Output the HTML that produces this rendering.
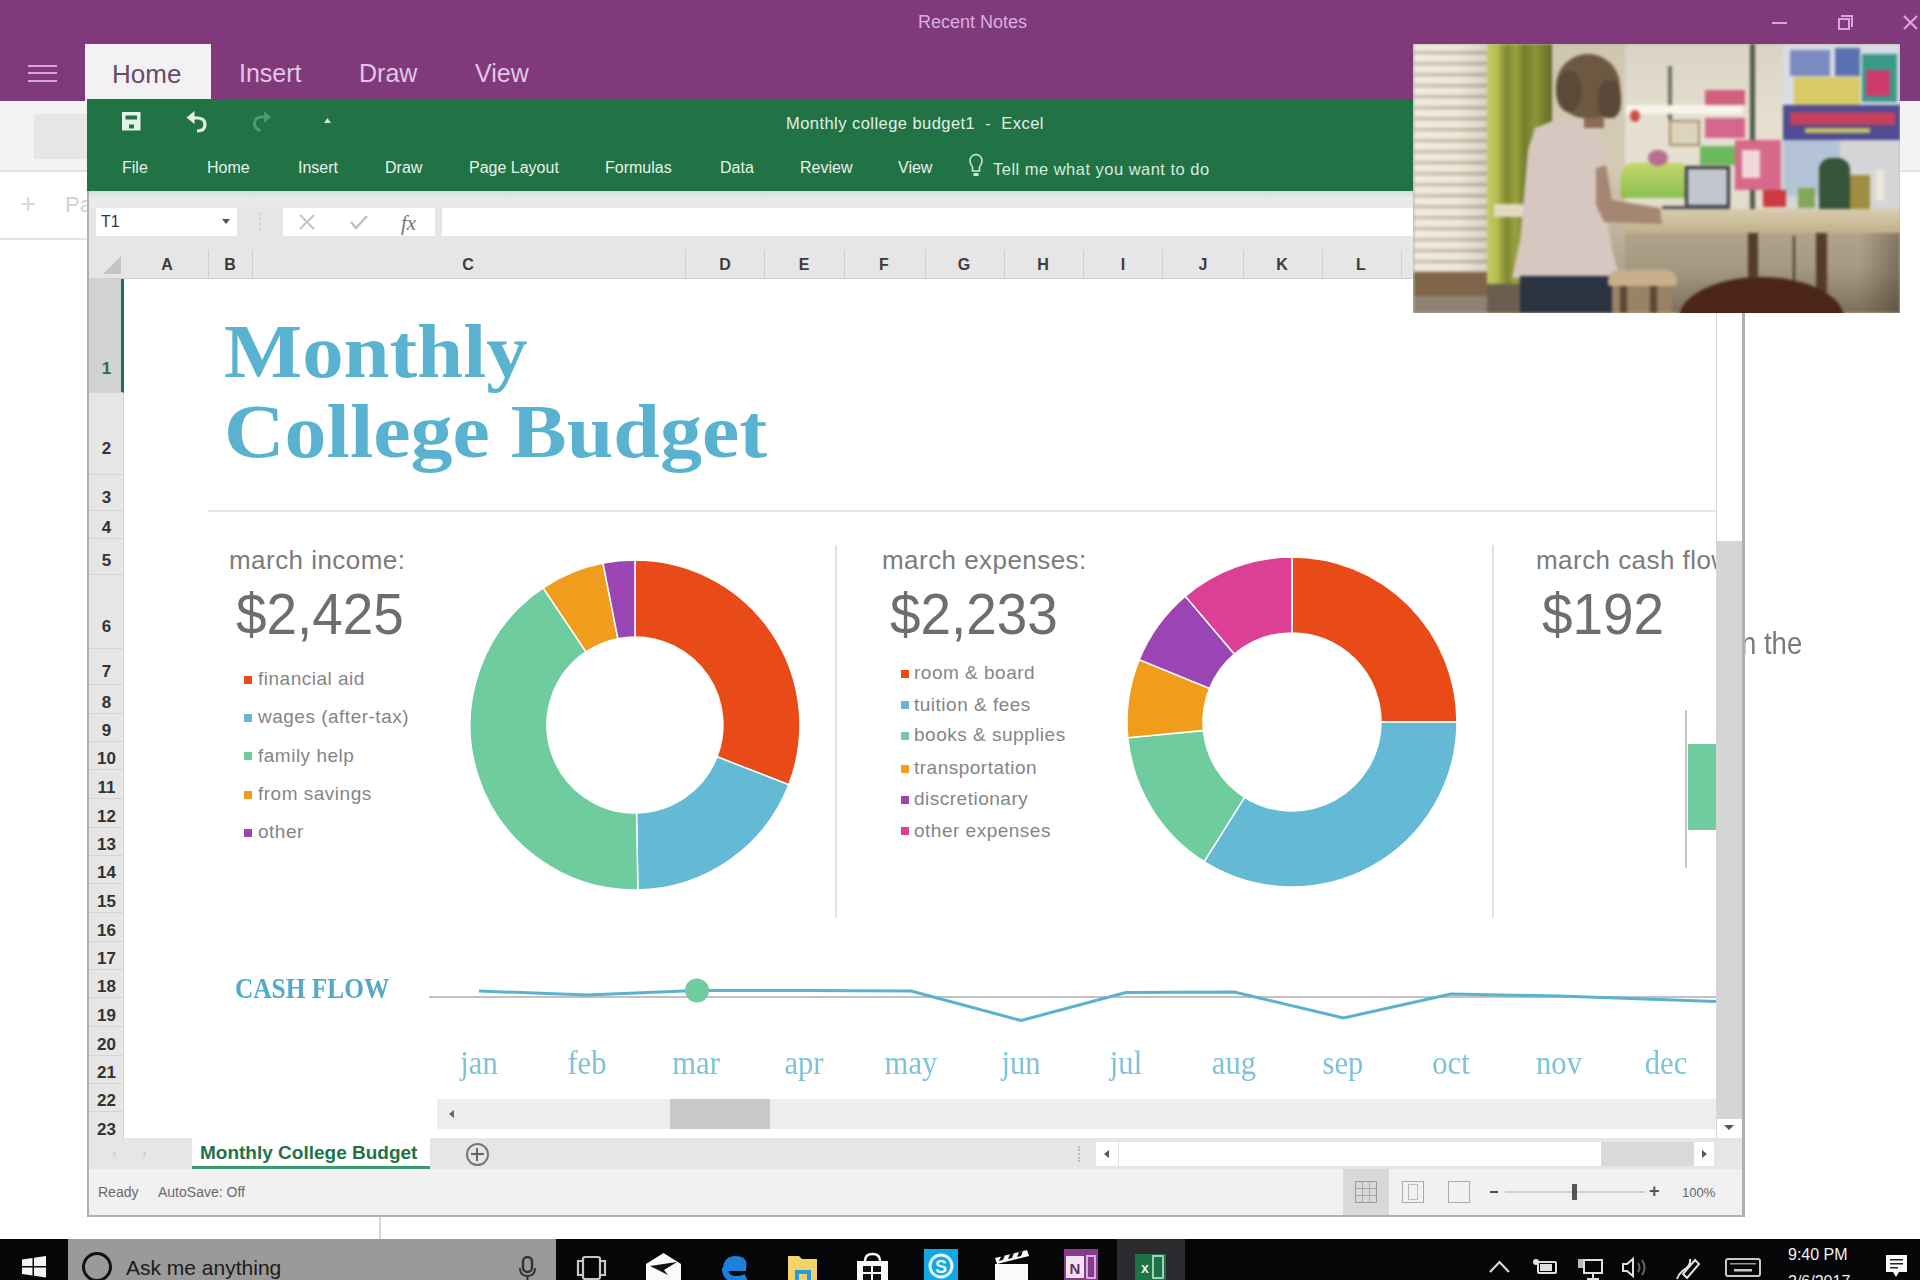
<!DOCTYPE html>
<html><head><meta charset="utf-8">
<style>
*{margin:0;padding:0;box-sizing:border-box}
html,body{width:1920px;height:1280px;overflow:hidden;background:#fff;font-family:"Liberation Sans",sans-serif}
.a{position:absolute}
.t{position:absolute;white-space:nowrap;line-height:1}
</style></head><body>
<!-- OneNote title/ribbon -->
<div class="a" style="left:0;top:0;width:1920px;height:101px;background:#80397b"></div>
<div class="a" style="left:28px;top:65px;width:29px;height:2px;background:#d9a6dc"></div>
<div class="a" style="left:28px;top:72px;width:29px;height:2px;background:#d9a6dc"></div>
<div class="a" style="left:28px;top:80px;width:29px;height:2px;background:#d9a6dc"></div>
<div class="a" style="left:85px;top:44px;width:126px;height:57px;background:#f2f2f2"></div>
<div class="t" style="left:112px;top:61px;font-size:26px;color:#684a6a">Home</div>
<div class="t" style="left:239px;top:61px;font-size:25px;color:#e2c6e4">Insert</div>
<div class="t" style="left:359px;top:61px;font-size:25px;color:#e2c6e4">Draw</div>
<div class="t" style="left:475px;top:61px;font-size:25px;color:#e2c6e4">View</div>
<div class="t" style="left:918px;top:13px;font-size:18px;color:#dcaee0">Recent Notes</div>
<!-- window controls -->
<div class="a" style="left:1772px;top:22px;width:15px;height:2px;background:#d9a6dc"></div>
<div class="a" style="left:1841px;top:15px;width:12px;height:12px;border-top:2px solid #d9a6dc;border-right:2px solid #d9a6dc"></div>
<div class="a" style="left:1838px;top:18px;width:12px;height:12px;border:2px solid #d9a6dc"></div>
<svg class="a" style="left:1900px;top:12px" width="20" height="20"><path d="M4 4 L17 17 M17 4 L4 17" stroke="#d9a6dc" stroke-width="2.2"/></svg>

<!-- OneNote page under -->
<div class="a" style="left:0;top:101px;width:1920px;height:69px;background:#f3f3f3"></div>
<div class="a" style="left:34px;top:114px;width:60px;height:45px;background:#e6e6e6"></div>
<div class="a" style="left:0;top:170px;width:1920px;height:2px;background:#e2e2e2"></div>
<div class="t" style="left:20px;top:190px;font-size:28px;color:#d8d8d8">+</div>
<div class="t" style="left:65px;top:194px;font-size:22px;color:#d2d2d2">Pa</div>
<div class="a" style="left:0;top:238px;width:100px;height:2px;background:#e4e4e4"></div>
<div class="t" style="left:1741px;top:627px;transform:scaleX(0.86);transform-origin:0 0;font-size:32px;color:#7a7a7a">n the</div>
<div class="a" style="left:379px;top:1216px;width:2px;height:24px;background:#d8d8d8"></div>

<!-- EXCEL WINDOW -->
<div id="xl" class="a" style="left:87px;top:99px;width:1658px;height:1118px;background:#fff;border-left:2px solid #a9b5b1;border-right:3px solid #a9b5b1;border-bottom:3px solid #a9b5b1">
</div>
<!-- ribbon -->
<div class="a" style="left:87px;top:99px;width:1658px;height:92px;background:#217346"></div>
<div class="t" style="left:786px;top:115px;letter-spacing:0.45px;font-size:16.5px;color:#e2f0e6">Monthly college budget1&nbsp; - &nbsp;Excel</div>
<div class="t" style="left:122px;top:160px;font-size:16px;color:#e6f2ea">File</div>
<div class="t" style="left:207px;top:160px;font-size:16px;color:#e6f2ea">Home</div>
<div class="t" style="left:298px;top:160px;font-size:16px;color:#e6f2ea">Insert</div>
<div class="t" style="left:385px;top:160px;font-size:16px;color:#e6f2ea">Draw</div>
<div class="t" style="left:469px;top:160px;font-size:16px;color:#e6f2ea">Page Layout</div>
<div class="t" style="left:605px;top:160px;font-size:16px;color:#e6f2ea">Formulas</div>
<div class="t" style="left:720px;top:160px;font-size:16px;color:#e6f2ea">Data</div>
<div class="t" style="left:800px;top:160px;font-size:16px;color:#e6f2ea">Review</div>
<div class="t" style="left:898px;top:160px;font-size:16px;color:#e6f2ea">View</div>
<div class="t" style="left:993px;top:161px;letter-spacing:0.48px;font-size:16.5px;color:#d6ecde">Tell me what you want to do</div>

<!-- formula bar -->
<div class="a" style="left:89px;top:191px;width:1653px;height:88px;background:#e6e6e6"></div>
<div class="a" style="left:89px;top:191px;width:1653px;height:17px;background:linear-gradient(180deg,#cfe0d6 0,#ebeaeb 40%,#eaeaea 100%)"></div>
<div class="a" style="left:96px;top:208px;width:141px;height:28px;background:#fff"></div>
<div class="t" style="left:101px;top:214px;font-size:16px;color:#333">T1</div>
<div class="a" style="left:283px;top:208px;width:152px;height:28px;background:#fff"></div>
<div class="a" style="left:442px;top:208px;width:1300px;height:28px;background:#fff"></div>

<!-- column headers -->
<div class="a" style="left:103px;top:256px;width:0;height:0;border-left:18px solid transparent;border-bottom:18px solid #c4c4c4"></div>
<div class="t" style="left:147px;top:257px;width:40px;text-align:center;font-size:16px;font-weight:bold;color:#3c3c3c">A</div>
<div class="t" style="left:210px;top:257px;width:40px;text-align:center;font-size:16px;font-weight:bold;color:#3c3c3c">B</div>
<div class="t" style="left:448px;top:257px;width:40px;text-align:center;font-size:16px;font-weight:bold;color:#3c3c3c">C</div>
<div class="t" style="left:705px;top:257px;width:40px;text-align:center;font-size:16px;font-weight:bold;color:#3c3c3c">D</div>
<div class="t" style="left:784px;top:257px;width:40px;text-align:center;font-size:16px;font-weight:bold;color:#3c3c3c">E</div>
<div class="t" style="left:864px;top:257px;width:40px;text-align:center;font-size:16px;font-weight:bold;color:#3c3c3c">F</div>
<div class="t" style="left:944px;top:257px;width:40px;text-align:center;font-size:16px;font-weight:bold;color:#3c3c3c">G</div>
<div class="t" style="left:1023px;top:257px;width:40px;text-align:center;font-size:16px;font-weight:bold;color:#3c3c3c">H</div>
<div class="t" style="left:1103px;top:257px;width:40px;text-align:center;font-size:16px;font-weight:bold;color:#3c3c3c">I</div>
<div class="t" style="left:1183px;top:257px;width:40px;text-align:center;font-size:16px;font-weight:bold;color:#3c3c3c">J</div>
<div class="t" style="left:1262px;top:257px;width:40px;text-align:center;font-size:16px;font-weight:bold;color:#3c3c3c">K</div>
<div class="t" style="left:1341px;top:257px;width:40px;text-align:center;font-size:16px;font-weight:bold;color:#3c3c3c">L</div>
<div class="a" style="left:208px;top:250px;width:1px;height:29px;background:#d0d0d0"></div>
<div class="a" style="left:252px;top:250px;width:1px;height:29px;background:#d0d0d0"></div>
<div class="a" style="left:685px;top:250px;width:1px;height:29px;background:#d0d0d0"></div>
<div class="a" style="left:764px;top:250px;width:1px;height:29px;background:#d0d0d0"></div>
<div class="a" style="left:844px;top:250px;width:1px;height:29px;background:#d0d0d0"></div>
<div class="a" style="left:925px;top:250px;width:1px;height:29px;background:#d0d0d0"></div>
<div class="a" style="left:1004px;top:250px;width:1px;height:29px;background:#d0d0d0"></div>
<div class="a" style="left:1083px;top:250px;width:1px;height:29px;background:#d0d0d0"></div>
<div class="a" style="left:1162px;top:250px;width:1px;height:29px;background:#d0d0d0"></div>
<div class="a" style="left:1243px;top:250px;width:1px;height:29px;background:#d0d0d0"></div>
<div class="a" style="left:1322px;top:250px;width:1px;height:29px;background:#d0d0d0"></div>
<div class="a" style="left:1401px;top:250px;width:1px;height:29px;background:#d0d0d0"></div>
<div class="a" style="left:89px;top:278px;width:1627px;height:1px;background:#cfcfcf"></div>
<!-- row headers -->
<div class="a" style="left:89px;top:279px;width:35px;height:860px;background:#e6e6e6;border-right:1px solid #d2d2d2"></div>
<div class="a" style="left:89px;top:279px;width:35px;height:114px;background:#d2d2d2;border-right:3px solid #217346"></div>
<div class="a" style="left:89px;top:392px;width:34px;height:1px;background:#d4d4d4"></div>
<div class="t" style="left:89px;top:360px;width:35px;text-align:center;font-size:17px;font-weight:bold;color:#217346">1</div>
<div class="a" style="left:89px;top:474px;width:34px;height:1px;background:#d4d4d4"></div>
<div class="t" style="left:89px;top:440px;width:35px;text-align:center;font-size:17px;font-weight:bold;color:#333">2</div>
<div class="a" style="left:89px;top:510px;width:34px;height:1px;background:#d4d4d4"></div>
<div class="t" style="left:89px;top:489px;width:35px;text-align:center;font-size:17px;font-weight:bold;color:#333">3</div>
<div class="a" style="left:89px;top:538px;width:34px;height:1px;background:#d4d4d4"></div>
<div class="t" style="left:89px;top:519px;width:35px;text-align:center;font-size:17px;font-weight:bold;color:#333">4</div>
<div class="a" style="left:89px;top:574px;width:34px;height:1px;background:#d4d4d4"></div>
<div class="t" style="left:89px;top:552px;width:35px;text-align:center;font-size:17px;font-weight:bold;color:#333">5</div>
<div class="a" style="left:89px;top:648px;width:34px;height:1px;background:#d4d4d4"></div>
<div class="t" style="left:89px;top:618px;width:35px;text-align:center;font-size:17px;font-weight:bold;color:#333">6</div>
<div class="a" style="left:89px;top:684px;width:34px;height:1px;background:#d4d4d4"></div>
<div class="t" style="left:89px;top:663px;width:35px;text-align:center;font-size:17px;font-weight:bold;color:#333">7</div>
<div class="a" style="left:89px;top:713px;width:34px;height:1px;background:#d4d4d4"></div>
<div class="t" style="left:89px;top:694px;width:35px;text-align:center;font-size:17px;font-weight:bold;color:#333">8</div>
<div class="a" style="left:89px;top:741px;width:34px;height:1px;background:#d4d4d4"></div>
<div class="t" style="left:89px;top:722px;width:35px;text-align:center;font-size:17px;font-weight:bold;color:#333">9</div>
<div class="a" style="left:89px;top:769px;width:34px;height:1px;background:#d4d4d4"></div>
<div class="t" style="left:89px;top:750px;width:35px;text-align:center;font-size:17px;font-weight:bold;color:#333">10</div>
<div class="a" style="left:89px;top:798px;width:34px;height:1px;background:#d4d4d4"></div>
<div class="t" style="left:89px;top:779px;width:35px;text-align:center;font-size:17px;font-weight:bold;color:#333">11</div>
<div class="a" style="left:89px;top:827px;width:34px;height:1px;background:#d4d4d4"></div>
<div class="t" style="left:89px;top:808px;width:35px;text-align:center;font-size:17px;font-weight:bold;color:#333">12</div>
<div class="a" style="left:89px;top:855px;width:34px;height:1px;background:#d4d4d4"></div>
<div class="t" style="left:89px;top:836px;width:35px;text-align:center;font-size:17px;font-weight:bold;color:#333">13</div>
<div class="a" style="left:89px;top:883px;width:34px;height:1px;background:#d4d4d4"></div>
<div class="t" style="left:89px;top:864px;width:35px;text-align:center;font-size:17px;font-weight:bold;color:#333">14</div>
<div class="a" style="left:89px;top:912px;width:34px;height:1px;background:#d4d4d4"></div>
<div class="t" style="left:89px;top:893px;width:35px;text-align:center;font-size:17px;font-weight:bold;color:#333">15</div>
<div class="a" style="left:89px;top:941px;width:34px;height:1px;background:#d4d4d4"></div>
<div class="t" style="left:89px;top:922px;width:35px;text-align:center;font-size:17px;font-weight:bold;color:#333">16</div>
<div class="a" style="left:89px;top:969px;width:34px;height:1px;background:#d4d4d4"></div>
<div class="t" style="left:89px;top:950px;width:35px;text-align:center;font-size:17px;font-weight:bold;color:#333">17</div>
<div class="a" style="left:89px;top:997px;width:34px;height:1px;background:#d4d4d4"></div>
<div class="t" style="left:89px;top:978px;width:35px;text-align:center;font-size:17px;font-weight:bold;color:#333">18</div>
<div class="a" style="left:89px;top:1026px;width:34px;height:1px;background:#d4d4d4"></div>
<div class="t" style="left:89px;top:1007px;width:35px;text-align:center;font-size:17px;font-weight:bold;color:#333">19</div>
<div class="a" style="left:89px;top:1055px;width:34px;height:1px;background:#d4d4d4"></div>
<div class="t" style="left:89px;top:1036px;width:35px;text-align:center;font-size:17px;font-weight:bold;color:#333">20</div>
<div class="a" style="left:89px;top:1083px;width:34px;height:1px;background:#d4d4d4"></div>
<div class="t" style="left:89px;top:1064px;width:35px;text-align:center;font-size:17px;font-weight:bold;color:#333">21</div>
<div class="a" style="left:89px;top:1111px;width:34px;height:1px;background:#d4d4d4"></div>
<div class="t" style="left:89px;top:1092px;width:35px;text-align:center;font-size:17px;font-weight:bold;color:#333">22</div>
<div class="a" style="left:89px;top:1140px;width:34px;height:1px;background:#d4d4d4"></div>
<div class="t" style="left:89px;top:1121px;width:35px;text-align:center;font-size:17px;font-weight:bold;color:#333">23</div>
<!-- SHEET -->
<div class="t" style="left:224px;top:313px;transform:scaleX(1.075);transform-origin:0 0;font-size:77px;font-weight:bold;font-family:'Liberation Serif',serif;color:#58b2d0">Monthly</div>
<div class="t" style="left:224px;top:393px;transform:scaleX(1.09);transform-origin:0 0;font-size:77px;font-weight:bold;font-family:'Liberation Serif',serif;color:#58b2d0">College Budget</div>
<div class="a" style="left:208px;top:510px;width:1508px;height:2px;background:#e6e6e6"></div>
<div class="a" style="left:835px;top:545px;width:2px;height:373px;background:#e2e2e2"></div>
<div class="a" style="left:1492px;top:545px;width:2px;height:373px;background:#e2e2e2"></div>
<div class="t" style="left:229px;top:547px;letter-spacing:0.45px;font-size:26px;color:#7b7b7b">march income:</div>
<div class="t" style="left:882px;top:547px;letter-spacing:0.45px;font-size:26px;color:#7b7b7b">march expenses:</div>
<div class="t" style="left:1536px;top:547px;letter-spacing:0.45px;font-size:26px;color:#7b7b7b">march cash flow</div>
<div class="t" style="left:236px;top:584.5px;transform:scaleX(0.946);transform-origin:0 0;font-size:58px;color:#6e6e6e">$2,425</div>
<div class="t" style="left:889.5px;top:584.5px;transform:scaleX(0.946);transform-origin:0 0;font-size:58px;color:#6e6e6e">$2,233</div>
<div class="t" style="left:1542px;top:584.5px;transform:scaleX(0.946);transform-origin:0 0;font-size:58px;color:#6e6e6e">$192</div>
<div class="a" style="left:244px;top:675.5px;width:8px;height:8px;background:#e94b18"></div>
<div class="t" style="left:258px;top:668.9px;letter-spacing:0.5px;font-size:19px;color:#858585">financial aid</div>
<div class="a" style="left:244px;top:713.8px;width:8px;height:8px;background:#64bad4"></div>
<div class="t" style="left:258px;top:707.2px;letter-spacing:0.5px;font-size:19px;color:#858585">wages (after-tax)</div>
<div class="a" style="left:244px;top:752.1px;width:8px;height:8px;background:#6fcc9e"></div>
<div class="t" style="left:258px;top:745.5px;letter-spacing:0.5px;font-size:19px;color:#858585">family help</div>
<div class="a" style="left:244px;top:790.5px;width:8px;height:8px;background:#f09c1c"></div>
<div class="t" style="left:258px;top:783.9px;letter-spacing:0.5px;font-size:19px;color:#858585">from savings</div>
<div class="a" style="left:244px;top:828.5px;width:8px;height:8px;background:#9b45b4"></div>
<div class="t" style="left:258px;top:821.9px;letter-spacing:0.5px;font-size:19px;color:#858585">other</div>
<div class="a" style="left:901px;top:670.0px;width:8px;height:8px;background:#e94b18"></div>
<div class="t" style="left:914px;top:663.4px;letter-spacing:0.5px;font-size:19px;color:#858585">room &amp; board</div>
<div class="a" style="left:901px;top:701.2px;width:8px;height:8px;background:#64bad4"></div>
<div class="t" style="left:914px;top:694.6px;letter-spacing:0.5px;font-size:19px;color:#858585">tuition &amp; fees</div>
<div class="a" style="left:901px;top:731.8px;width:8px;height:8px;background:#6fcc9e"></div>
<div class="t" style="left:914px;top:725.2px;letter-spacing:0.5px;font-size:19px;color:#858585">books &amp; supplies</div>
<div class="a" style="left:901px;top:764.9px;width:8px;height:8px;background:#f09c1c"></div>
<div class="t" style="left:914px;top:758.3px;letter-spacing:0.5px;font-size:19px;color:#858585">transportation</div>
<div class="a" style="left:901px;top:795.9px;width:8px;height:8px;background:#9b45b4"></div>
<div class="t" style="left:914px;top:789.3px;letter-spacing:0.5px;font-size:19px;color:#858585">discretionary</div>
<div class="a" style="left:901px;top:827.4px;width:8px;height:8px;background:#dd3e96"></div>
<div class="t" style="left:914px;top:820.8px;letter-spacing:0.5px;font-size:19px;color:#858585">other expenses</div>
<svg class="a" style="left:0;top:0" width="1920" height="1280" viewBox="0 0 1920 1280">
<path d="M635.0 560.0A165 165 0 0 1 788.8 784.7L717.0 756.8A88 88 0 0 0 635.0 637.0Z" fill="#e94b18" stroke="#fff" stroke-width="1.5"/>
<path d="M788.8 784.7A165 165 0 0 1 637.9 890.0L636.5 813.0A88 88 0 0 0 717.0 756.8Z" fill="#64bad4" stroke="#fff" stroke-width="1.5"/>
<path d="M637.9 890.0A165 165 0 0 1 543.2 587.9L586.0 651.9A88 88 0 0 0 636.5 813.0Z" fill="#6fcc9e" stroke="#fff" stroke-width="1.5"/>
<path d="M543.2 587.9A165 165 0 0 1 603.0 563.1L617.9 638.7A88 88 0 0 0 586.0 651.9Z" fill="#f09c1c" stroke="#fff" stroke-width="1.5"/>
<path d="M603.0 563.1A165 165 0 0 1 635.0 560.0L635.0 637.0A88 88 0 0 0 617.9 638.7Z" fill="#9b45b4" stroke="#fff" stroke-width="1.5"/>
<path d="M1292.0 557.0A165 165 0 0 1 1457.0 722.0L1381.0 722.0A89 89 0 0 0 1292.0 633.0Z" fill="#e94b18" stroke="#fff" stroke-width="1.5"/>
<path d="M1457.0 722.0A165 165 0 0 1 1204.1 861.6L1244.6 797.3A89 89 0 0 0 1381.0 722.0Z" fill="#64bad4" stroke="#fff" stroke-width="1.5"/>
<path d="M1204.1 861.6A165 165 0 0 1 1127.8 737.8L1203.4 730.5A89 89 0 0 0 1244.6 797.3Z" fill="#6fcc9e" stroke="#fff" stroke-width="1.5"/>
<path d="M1127.8 737.8A165 165 0 0 1 1139.2 659.7L1209.6 688.4A89 89 0 0 0 1203.4 730.5Z" fill="#f09c1c" stroke="#fff" stroke-width="1.5"/>
<path d="M1139.2 659.7A165 165 0 0 1 1185.3 596.2L1234.4 654.1A89 89 0 0 0 1209.6 688.4Z" fill="#9b45b4" stroke="#fff" stroke-width="1.5"/>
<path d="M1185.3 596.2A165 165 0 0 1 1292.0 557.0L1292.0 633.0A89 89 0 0 0 1234.4 654.1Z" fill="#dd3e96" stroke="#fff" stroke-width="1.5"/>
</svg>

<div class="a" style="left:1685px;top:710px;width:2px;height:158px;background:#c8c8c8"></div>
<div class="a" style="left:1688px;top:744px;width:28px;height:86px;background:#6fcc9e"></div>
<div class="t" style="left:235px;top:973px;transform:scaleX(0.845);transform-origin:0 0;font-size:30px;font-weight:bold;font-family:'Liberation Serif',serif;color:#55a9c8">CASH FLOW</div>
<svg class="a" style="left:0;top:0" width="1920" height="1280"><line x1="429" y1="997" x2="1716" y2="997" stroke="#c2c2c2" stroke-width="1.8"/><polyline fill="none" stroke="#5ab2cf" stroke-width="3" stroke-linejoin="round" points="479,991 587,995 696,990.5 804,990.5 911,991 1021,1020.5 1126,992.5 1234,992 1343.5,1018 1451,994 1559,996 1716,1001.5"/><circle cx="697" cy="990.5" r="12" fill="#6fcc9e"/></svg>
<div class="t" style="left:429px;top:1046.5px;width:100px;text-align:center;transform:scaleX(0.93);font-size:33px;font-family:'Liberation Serif',serif;color:#7ec3d8">jan</div>
<div class="t" style="left:537px;top:1046.5px;width:100px;text-align:center;transform:scaleX(0.93);font-size:33px;font-family:'Liberation Serif',serif;color:#7ec3d8">feb</div>
<div class="t" style="left:646px;top:1046.5px;width:100px;text-align:center;transform:scaleX(0.93);font-size:33px;font-family:'Liberation Serif',serif;color:#7ec3d8">mar</div>
<div class="t" style="left:754px;top:1046.5px;width:100px;text-align:center;transform:scaleX(0.93);font-size:33px;font-family:'Liberation Serif',serif;color:#7ec3d8">apr</div>
<div class="t" style="left:861px;top:1046.5px;width:100px;text-align:center;transform:scaleX(0.93);font-size:33px;font-family:'Liberation Serif',serif;color:#7ec3d8">may</div>
<div class="t" style="left:971px;top:1046.5px;width:100px;text-align:center;transform:scaleX(0.93);font-size:33px;font-family:'Liberation Serif',serif;color:#7ec3d8">jun</div>
<div class="t" style="left:1076px;top:1046.5px;width:100px;text-align:center;transform:scaleX(0.93);font-size:33px;font-family:'Liberation Serif',serif;color:#7ec3d8">jul</div>
<div class="t" style="left:1184px;top:1046.5px;width:100px;text-align:center;transform:scaleX(0.93);font-size:33px;font-family:'Liberation Serif',serif;color:#7ec3d8">aug</div>
<div class="t" style="left:1293px;top:1046.5px;width:100px;text-align:center;transform:scaleX(0.93);font-size:33px;font-family:'Liberation Serif',serif;color:#7ec3d8">sep</div>
<div class="t" style="left:1401px;top:1046.5px;width:100px;text-align:center;transform:scaleX(0.93);font-size:33px;font-family:'Liberation Serif',serif;color:#7ec3d8">oct</div>
<div class="t" style="left:1509px;top:1046.5px;width:100px;text-align:center;transform:scaleX(0.93);font-size:33px;font-family:'Liberation Serif',serif;color:#7ec3d8">nov</div>
<div class="t" style="left:1616px;top:1046.5px;width:100px;text-align:center;transform:scaleX(0.93);font-size:33px;font-family:'Liberation Serif',serif;color:#7ec3d8">dec</div>
<div class="a" style="left:437px;top:1099px;width:1279px;height:30px;background:#eeeeee"></div>
<div class="a" style="left:670px;top:1099px;width:100px;height:30px;background:#c9c9c9"></div>
<div class="a" style="left:449px;top:1110px;width:0;height:0;border-top:4px solid transparent;border-bottom:4px solid transparent;border-right:5px solid #666"></div>
<div class="a" style="left:1716px;top:279px;width:1px;height:860px;background:#d6d6d6"></div>
<div class="a" style="left:1717px;top:541px;width:25px;height:578px;background:#d5d5d5"></div>
<div class="a" style="left:1724px;top:1125px;width:0;height:0;border-left:5px solid transparent;border-right:5px solid transparent;border-top:5px solid #555"></div>
<div class="a" style="left:89px;top:1138px;width:1653px;height:31px;background:#e6e6e6"></div>
<div class="a" style="left:192px;top:1138px;width:238px;height:31px;background:#fff;border-bottom:3px solid #3c9a6c"></div>
<div class="t" style="left:200px;top:1143px;font-size:19px;font-weight:bold;color:#217346">Monthly College Budget</div>
<div class="t" style="left:112px;top:1146px;font-size:14px;color:#c4c4c4">&#x2039;</div>
<div class="t" style="left:142px;top:1146px;font-size:14px;color:#c4c4c4">&#x203A;</div>
<div class="a" style="left:466px;top:1143px;width:23px;height:23px;border:2px solid #777;border-radius:50%"></div>
<div class="a" style="left:471px;top:1153px;width:13px;height:2px;background:#666"></div>
<div class="a" style="left:476px;top:1148px;width:2px;height:13px;background:#666"></div>
<div class="a" style="left:1078px;top:1146px;width:2px;height:16px;border-left:2px dotted #bbb"></div>
<div class="a" style="left:1096px;top:1142px;width:505px;height:24px;background:#fff"></div>
<div class="a" style="left:1118px;top:1142px;width:1px;height:24px;background:#e6e6e6"></div>
<div class="a" style="left:1104px;top:1150px;width:0;height:0;border-top:4px solid transparent;border-bottom:4px solid transparent;border-right:5px solid #555"></div>
<div class="a" style="left:1601px;top:1142px;width:93px;height:24px;background:#d9d9d9"></div>
<div class="a" style="left:1694px;top:1142px;width:20px;height:24px;background:#fff"></div>
<div class="a" style="left:1702px;top:1150px;width:0;height:0;border-top:4px solid transparent;border-bottom:4px solid transparent;border-left:5px solid #555"></div>
<div class="a" style="left:89px;top:1169px;width:1653px;height:46px;background:#f1f1f1"></div>
<div class="t" style="left:98px;top:1185px;font-size:14px;color:#6a6a6a">Ready</div>
<div class="t" style="left:158px;top:1185px;font-size:14px;color:#6a6a6a">AutoSave: Off</div>
<div class="a" style="left:1343px;top:1169px;width:46px;height:46px;background:#d9d9d9"></div>
<div class="a" style="left:1355px;top:1181px;width:22px;height:22px;border:1px solid #999;background:repeating-linear-gradient(90deg,transparent 0 6px,#aaa 6px 7px),repeating-linear-gradient(0deg,transparent 0 6px,#aaa 6px 7px)"></div>
<div class="a" style="left:1402px;top:1181px;width:22px;height:22px;border:1px solid #aaa"></div>
<div class="a" style="left:1408px;top:1184px;width:10px;height:16px;border:1px solid #bbb"></div>
<div class="a" style="left:1448px;top:1181px;width:22px;height:22px;border:1px solid #aaa"></div>
<div class="a" style="left:1490px;top:1191px;width:8px;height:2px;background:#555"></div>
<div class="a" style="left:1505px;top:1191px;width:140px;height:2px;background:#cfcfcf"></div>
<div class="a" style="left:1572px;top:1184px;width:5px;height:16px;background:#555"></div>
<div class="t" style="left:1649px;top:1182px;font-size:18px;font-weight:bold;color:#555">+</div>
<div class="t" style="left:1682px;top:1186px;font-size:13px;color:#666">100%</div>
<!-- PHOTO -->
<div id="photo" class="a" style="left:1413px;top:44px;width:487px;height:269px;background:#bdb29a;overflow:hidden"><div class="a" style="left:0;top:0;width:487px;height:269px;filter:blur(1.4px)"><div class="a" style="left:0px;top:0px;width:487px;height:269px;background:#bdb29a;"></div>
<div class="a" style="left:1px;top:0px;width:74px;height:228px;background:repeating-linear-gradient(180deg,#efe8dc 0 6px,#ddd3c2 6px 8px,#b8ad9a 8px 10px,#e6ddcc 10px 11px);"></div>
<div class="a" style="left:1px;top:0px;width:74px;height:228px;background:linear-gradient(90deg,rgba(255,255,255,0.15),rgba(0,0,0,0) 60%,rgba(60,50,30,0.12));"></div>
<div class="a" style="left:1px;top:228px;width:76px;height:24px;background:#7f6448;"></div>
<div class="a" style="left:1px;top:252px;width:76px;height:17px;background:#8c8272;"></div>
<div class="a" style="left:74px;top:0px;width:65px;height:240px;background:linear-gradient(90deg,#c6cc64 0,#b2bb50 16%,#7e8732 30%,#9aa33e 44%,#737c2c 58%,#8d9636 74%,#626b28 100%);"></div>
<div class="a" style="left:74px;top:240px;width:65px;height:29px;background:#6a5e4e;"></div>
<div class="a" style="left:139px;top:0px;width:73px;height:269px;background:linear-gradient(180deg,#cfc6b0 0,#d4cbb4 45%,#bcb098 72%,#9a8e78 100%);"></div>
<div class="a" style="left:212px;top:0px;width:158px;height:165px;background:linear-gradient(180deg,#d9d3c4 0,#e6e0d2 50%,#e2dccb 100%);"></div>
<div class="a" style="left:255px;top:22px;width:4px;height:54px;background:#6a7460;"></div>
<div class="a" style="left:337px;top:0px;width:5px;height:165px;background:#4e5a48;"></div>
<div class="a" style="left:292px;top:46px;width:40px;height:15px;background:#d0607e;"></div>
<div class="a" style="left:292px;top:74px;width:40px;height:20px;background:#d4668a;"></div>
<div class="a" style="left:256px;top:76px;width:31px;height:26px;background:#ddd4bc;border:2px solid #a48e66"></div>
<div class="a" style="left:213px;top:61px;width:117px;height:9px;background:#f7f4ec;"></div>
<div class="a" style="left:217px;top:66px;width:10px;height:12px;background:#c85040;border-radius:50%"></div>
<div class="a" style="left:370px;top:0px;width:117px;height:61px;background:#d8dce4;"></div>
<div class="a" style="left:377px;top:6px;width:40px;height:26px;background:#7a8cc0;"></div>
<div class="a" style="left:422px;top:4px;width:25px;height:28px;background:#5a70b0;"></div>
<div class="a" style="left:381px;top:33px;width:66px;height:28px;background:#d9ca66;"></div>
<div class="a" style="left:449px;top:10px;width:35px;height:48px;background:#3a9a8a;"></div>
<div class="a" style="left:453px;top:26px;width:24px;height:26px;background:#cf3c6c;"></div>
<div class="a" style="left:370px;top:61px;width:117px;height:35px;background:#4e4c92;"></div>
<div class="a" style="left:377px;top:68px;width:105px;height:13px;background:#c6405e;"></div>
<div class="a" style="left:392px;top:84px;width:65px;height:5px;background:#c8c060;"></div>
<div class="a" style="left:370px;top:96px;width:117px;height:69px;background:#d6d6d8;"></div>
<div class="a" style="left:370px;top:96px;width:57px;height:56px;background:#b4c4d6;"></div>
<div class="a" style="left:322px;top:96px;width:46px;height:50px;background:#d6688a;"></div>
<div class="a" style="left:329px;top:106px;width:18px;height:28px;background:#f0d8dc;"></div>
<div class="a" style="left:287px;top:102px;width:35px;height:19px;background:#6cb85c;"></div>
<div class="a" style="left:208px;top:119px;width:69px;height:35px;background:linear-gradient(180deg,#c2d86a,#8cbe50);border-radius:12px 12px 2px 2px"></div>
<div class="a" style="left:235px;top:106px;width:20px;height:16px;background:#b4708e;border-radius:50%"></div>
<div class="a" style="left:272px;top:122px;width:45px;height:42px;background:#c4c6d0;border:3px solid #383a40"></div>
<div class="a" style="left:249px;top:162px;width:68px;height:11px;background:#4a4c52;"></div>
<div class="a" style="left:350px;top:146px;width:23px;height:17px;background:#cc3a3e;"></div>
<div class="a" style="left:385px;top:144px;width:17px;height:20px;background:#80a858;"></div>
<div class="a" style="left:406px;top:114px;width:31px;height:61px;background:#355439;border-radius:12px 12px 2px 2px"></div>
<div class="a" style="left:437px;top:131px;width:20px;height:42px;background:#a08e40;"></div>
<div class="a" style="left:463px;top:126px;width:8px;height:30px;background:#efe9dc;"></div>
<div class="a" style="left:81px;top:160px;width:38px;height:13px;background:#e4dac2;"></div>
<div class="a" style="left:212px;top:165px;width:275px;height:24px;background:linear-gradient(180deg,#d8ccae,#c0b08c);"></div>
<div class="a" style="left:212px;top:189px;width:275px;height:80px;background:linear-gradient(180deg,#b0a48c 0,#a49880 45%,#7c705c 100%);"></div>
<div class="a" style="left:447px;top:189px;width:40px;height:80px;background:linear-gradient(90deg,rgba(0,0,0,0),rgba(40,30,20,0.35));"></div>
<div class="a" style="left:335px;top:189px;width:10px;height:59px;background:#553c2a;"></div>
<div class="a" style="left:403px;top:189px;width:11px;height:59px;background:#553c2a;"></div>
<div class="a" style="left:380px;top:192px;width:2px;height:54px;background:#3a3630;"></div>
<div class="a" style="left:99px;top:74px;width:108px;height:160px;background:#d6c8c0;clip-path:polygon(23px 10px,48px 0px,86px 2px,94px 32px,92px 82px,100px 132px,108px 160px,0px 160px,8px 122px,12px 78px,16px 32px)"></div>
<div class="a" style="left:183px;top:121px;width:66px;height:59px;background:#a48672;clip-path:polygon(0px 3px,10px 0px,16px 35px,64px 43px,66px 59px,8px 57px,0px 40px)"></div>
<div class="a" style="left:171px;top:64px;width:20px;height:20px;background:#8a6c56;"></div>
<div class="a" style="left:143px;top:10px;width:64px;height:64px;background:#6d5842;border-radius:50% 50% 45% 45%"></div>
<div class="a" style="left:143px;top:26px;width:26px;height:42px;background:#5c4a38;border-radius:50%"></div>
<div class="a" style="left:185px;top:36px;width:23px;height:38px;background:#5a4838;border-radius:40%"></div>
<div class="a" style="left:107px;top:232px;width:92px;height:37px;background:#2b3240;"></div>
<div class="a" style="left:195px;top:226px;width:69px;height:16px;background:#c8b08c;border-radius:10px 10px 2px 2px"></div>
<div class="a" style="left:199px;top:242px;width:60px;height:27px;background:#9a8266;"></div>
<div class="a" style="left:207px;top:242px;width:7px;height:27px;background:#5e4634;"></div>
<div class="a" style="left:237px;top:242px;width:7px;height:27px;background:#5e4634;"></div>
<div class="a" style="left:266px;top:233px;width:165px;height:83px;background:#4b2519;border-radius:50% 50% 0 0"></div></div></div>

<!-- TASKBAR -->

<div class="a" style="left:0;top:1239px;width:1920px;height:41px;background:#050608"></div>
<div class="a" style="left:68px;top:1239px;width:488px;height:41px;background:#9a9a9a"></div>
<div class="t" style="left:126px;top:1257px;font-size:21px;color:#1c1c1c">Ask me anything</div>
<div class="a" style="left:82px;top:1252px;width:30px;height:30px;border:3px solid #111;border-radius:50%"></div>
<div class="a" style="left:1117px;top:1239px;width:67px;height:41px;background:#3a3a3a"></div>
<svg class="a" style="left:0;top:1239px" width="1920" height="41" viewBox="0 1239 1920 41"><g fill="#f4f4f4"><path d="M22 1259.5 L32.5 1258 V1266 H22Z"/><path d="M34 1257.8 L46 1256 V1266 H34Z"/><path d="M22 1267.5 H32.5 V1275.5 L22 1274Z"/><path d="M34 1267.5 H46 V1277.5 L34 1275.8Z"/></g><rect x="523" y="1257" width="9" height="15" rx="4.5" fill="none" stroke="#333" stroke-width="2.5"/><path d="M520 1268 q0 8 7.5 8 q7.5 0 7.5-8" fill="none" stroke="#333" stroke-width="2"/><rect x="526.5" y="1275" width="2" height="5" fill="#333"/><rect x="583" y="1257" width="17" height="22" rx="2" fill="none" stroke="#c8c8c8" stroke-width="2.2"/><path d="M583 1261 h-5 v14 h5 M600 1261 h5 v14 h-5" fill="none" stroke="#c8c8c8" stroke-width="2.2"/><path d="M646 1264 L663.5 1253 L681 1264 V1280 H646Z" fill="#fafafa"/><path d="M650 1266 L677 1262 L664 1270 L668 1275Z" fill="#111"/><path d="M746 1268 H726 q1 -9 9.5 -9 q8.5 0 8 6 h-15" fill="none" stroke="#1f7fdc" stroke-width="6"/><path d="M725 1268 q0 11 11 11 q6 0 10 -2" fill="none" stroke="#1f7fdc" stroke-width="6"/><path d="M788 1256 h11 l3 3 h15 v21 h-29z" fill="#f3d46a"/><rect x="795" y="1270" width="16" height="10" fill="#2b9be0"/><rect x="799" y="1274" width="8" height="6" fill="#f3d46a"/><path d="M857 1261 h31 v19 h-31z" fill="#fafafa"/><path d="M865 1261 q0 -7 7.5 -7 q7.5 0 7.5 7" fill="none" stroke="#fafafa" stroke-width="2.5"/><g fill="#111"><rect x="863" y="1266" width="8" height="6"/><rect x="873" y="1266" width="8" height="6"/><rect x="863" y="1274" width="8" height="6"/><rect x="873" y="1274" width="8" height="6"/></g><rect x="924" y="1249" width="34" height="31" fill="#10a9e6"/><circle cx="941" cy="1266" r="11" fill="none" stroke="#e8f6fd" stroke-width="3"/><text x="941" y="1273" font-family="Liberation Sans" font-weight="bold" font-size="18" text-anchor="middle" fill="#e8f6fd">S</text><rect x="995" y="1264" width="33" height="16" fill="#fafafa"/><path d="M995 1258 l32 -8 l2 6 l-32 8z" fill="#fafafa"/><g fill="#111"><path d="M1001 1256 l4 -1 l-2 5 l-4 1z"/><path d="M1010 1254 l4 -1 l-2 5 l-4 1z"/><path d="M1019 1252 l4 -1 l-2 5 l-4 1z"/></g><rect x="1064" y="1249" width="34" height="31" fill="#8a3a8e"/><rect x="1066" y="1256" width="18" height="22" fill="#f2e4f2"/><text x="1075" y="1274" font-family="Liberation Sans" font-weight="bold" font-size="15" text-anchor="middle" fill="#6a2a6e">N</text><rect x="1087" y="1256" width="8" height="22" fill="none" stroke="#d4b0d6" stroke-width="2"/><rect x="1117" y="1239" width="68" height="41" fill="#2b2b30"/><rect x="1135" y="1254" width="31" height="26" fill="#1f7245"/><text x="1145" y="1273" font-family="Liberation Sans" font-weight="bold" font-size="14" text-anchor="middle" fill="#e6f2ea">x</text><rect x="1153" y="1256" width="10" height="22" fill="none" stroke="#9ed0b4" stroke-width="2"/><path d="M1490 1272 l9.5 -10 l9.5 10" fill="none" stroke="#d8d8d8" stroke-width="2.2"/><rect x="1538" y="1262" width="18" height="11" rx="1" fill="none" stroke="#e0e0e0" stroke-width="2"/><rect x="1540" y="1264" width="12" height="7" fill="#e0e0e0"/><circle cx="1536" cy="1262" r="3" fill="#e0e0e0"/><rect x="1584" y="1260" width="18" height="13" fill="none" stroke="#e0e0e0" stroke-width="2"/><rect x="1592" y="1273" width="2" height="5" fill="#e0e0e0"/><rect x="1587" y="1278" width="12" height="2" fill="#e0e0e0"/><rect x="1578" y="1259" width="5" height="9" fill="#bbb"/><path d="M1623 1264 h4 l6 -5 v17 l-6 -5 h-4z" fill="none" stroke="#e0e0e0" stroke-width="2"/><path d="M1638 1263 q3 4.5 0 9 M1642 1260 q5 7.5 0 15" fill="none" stroke="#666" stroke-width="2"/><path d="M1677 1279 q2 -6 8 -10 q6 -4 5 -10 M1683 1274 l12 -14 l4 4 l-12 14z" fill="none" stroke="#e0e0e0" stroke-width="2"/><rect x="1726" y="1259" width="34" height="17" rx="2" fill="none" stroke="#c8c8c8" stroke-width="2"/><rect x="1734" y="1269" width="18" height="2.5" fill="#c8c8c8"/><g fill="#999"><rect x="1730" y="1263" width="26" height="1.5"/></g><path d="M1886 1255 h21 v17 h-8 l-3 5 l-3 -5 h-7z" fill="#fafafa"/><g fill="#222"><rect x="1890" y="1259" width="13" height="1.5"/><rect x="1890" y="1263" width="13" height="1.5"/><rect x="1890" y="1267" width="8" height="1.5"/></g></svg>
<div class="t" style="left:1788px;top:1247px;font-size:16px;color:#f0f0f0">9:40 PM</div>
<div class="t" style="left:1788px;top:1274px;font-size:16px;color:#f0f0f0">2/6/2017</div>
<svg class="a" style="left:0;top:99px" width="1300" height="92" viewBox="0 99 1300 92"><rect x="122" y="112" width="18.5" height="18.5" fill="#e4f2e8"/><rect x="125.5" y="115.5" width="11.5" height="4" fill="#217346"/><rect x="129" y="124.5" width="5" height="4" fill="#217346"/><path d="M193 118 h4 q8 0 8 6.5 q0 6.5 -8 6.5" fill="none" stroke="#e4f2e8" stroke-width="3.2"/><path d="M186.5 117.5 l8 -6.5 v13z" fill="#e4f2e8"/><path d="M265 117 q-10 -1 -10.5 6 q0 6 6 7.5" fill="none" stroke="#4e9a70" stroke-width="3"/><path d="M271 117 l-7 -6 v12z" fill="#4e9a70"/><path d="M324 123 h7 l-3.5 -5z" fill="#cfe8d8"/><path d="M972.5 167 q-2.5 -3 -2.5 -6.5 a6 6 0 0 1 12 0 q0 3.5 -2.5 6.5 v4 h-7z" fill="none" stroke="#cfe6d6" stroke-width="1.6"/><rect x="973.5" y="173" width="5" height="3" fill="#cfe6d6"/></svg>
<svg class="a" style="left:0;top:191px" width="500" height="88" viewBox="0 191 500 88"><path d="M222 219 h8 l-4 5z" fill="#555"/><g fill="#d0d0d0"><rect x="259" y="213" width="2" height="2"/><rect x="259" y="218" width="2" height="2"/><rect x="259" y="223" width="2" height="2"/><rect x="259" y="228" width="2" height="2"/></g><path d="M300 215 l14 14 M314 215 l-14 14" stroke="#c4c4c4" stroke-width="2"/><path d="M351 222 l5 6 l11 -12" fill="none" stroke="#bdbdbd" stroke-width="2.4"/><text x="401" y="230" font-family="Liberation Serif" font-style="italic" font-size="21" fill="#777">fx</text></svg>
</body></html>
